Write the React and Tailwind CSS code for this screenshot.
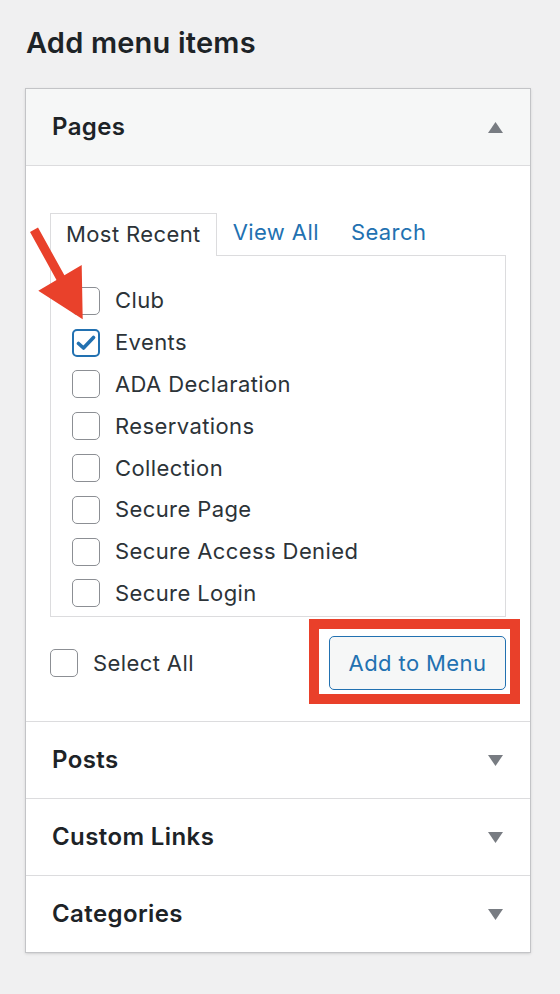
import React from 'react';

const pages = [
    { title: 'Club', checked: false },
    { title: 'Events', checked: true },
    { title: 'ADA Declaration', checked: false },
    { title: 'Reservations', checked: false },
    { title: 'Collection', checked: false },
    { title: 'Secure Page', checked: false },
    { title: 'Secure Access Denied', checked: false },
    { title: 'Secure Login', checked: false },
];

const Caret = ({ up }) => (
    <svg width="15" height="11" viewBox="0 0 15 11" className="shrink-0">
        {up ? <polygon points="7.5,0 15,11 0,11" fill="#787c82" /> : <polygon points="0,0 15,0 7.5,11" fill="#787c82" />}
    </svg>
);

const Checkbox = ({ checked }) => (
    <span
        className={`flex items-center justify-center w-[28px] h-[28px] rounded-[5px] bg-white shrink-0 ${
            checked ? 'border-2 border-[#2271b1]' : 'border border-[#8c8f94]'
        }`}
    >
        {checked && (
            <svg width="20" height="16" viewBox="0 0 20 16">
                <path d="M2.5 8.5 L7.5 13 L17.5 2.5" fill="none" stroke="#2271b1" strokeWidth="3.6" strokeLinecap="round" strokeLinejoin="round" />
            </svg>
        )}
    </span>
);

const Section = ({ title }) => (
    <div className="flex items-center justify-between h-[77px] pl-[26px] pr-[27px] border-t border-[#dcdcde]">
        <h3 className="text-[24px] font-semibold tracking-[0.4px] text-[#1d2327]">{title}</h3>
        <Caret />
    </div>
);

const App = () => {
    return (
        <div className="relative min-h-[994px] bg-[#f0f0f1] pt-[24px] font-['Inter',sans-serif]">
            <h2 className="ml-[26px] text-[29px] leading-[38px] font-semibold text-[#1d2327] tracking-[0.2px]">Add menu items</h2>

            <div className="ml-[25px] mt-[26px] w-[506px] bg-white border border-[#c3c4c7] shadow-sm">
                {/* Pages */}
                <div className="flex items-center justify-between h-[77px] pl-[26px] pr-[27px] bg-[#f6f7f7] border-b border-[#dcdcde]">
                    <h3 className="text-[24px] font-semibold tracking-[0.4px] text-[#1d2327]">Pages</h3>
                    <Caret up />
                </div>

                <div className="px-[24px] pt-[46px] pb-[31px] tracking-[0.4px]">
                    <div className="flex items-end text-[22px] leading-[28px]">
                        <div className="h-[43px] px-[15px] pt-[6px] border border-b-0 border-[#dcdcde] bg-white text-[#2c3338] -mb-px relative">
                            Most Recent
                        </div>
                        <div className="h-[43px] pt-[6px] pl-[16px] text-[#2271b1]">View All</div>
                        <div className="h-[43px] pt-[6px] pl-[32px] text-[#2271b1]">Search</div>
                    </div>
                    <div className="h-[362px] overflow-hidden border border-[#dcdcde] pt-[24px] pl-[21px]">
                        {pages.map((p) => (
                            <label key={p.title} className="flex items-center gap-[15px] h-[41.8px]">
                                <Checkbox checked={p.checked} />
                                <span className="text-[22px] text-[#2c3338]">{p.title}</span>
                            </label>
                        ))}
                    </div>

                    <div className="flex items-center justify-between mt-[19px]">
                        <label className="flex items-center gap-[15px]">
                            <Checkbox />
                            <span className="text-[22px] text-[#2c3338]">Select All</span>
                        </label>
                        <div className="relative">
                            <button className="w-[177px] h-[54px] rounded-[5px] border border-[#2271b1] bg-[#f6f7f7] text-[22px] tracking-[0.4px] text-[#2271b1]">
                                Add to Menu
                            </button>
                            <div className="absolute -left-[20px] -top-[17px] w-[211px] h-[85px] border-[10px] border-[#e9402a]" />
                        </div>
                    </div>
                </div>

                <Section title="Posts" />
                <Section title="Custom Links" />
                <Section title="Categories" />
            </div>

            <svg className="absolute left-0 top-0" width="120" height="340" viewBox="0 0 120 340">
                <polygon points="30,232 38,227.5 64.4,275.3 81.7,265 82.7,319.3 38.3,290.7 56.5,279.9" fill="#e9412b" />
            </svg>
        </div>
    );
};

export default App;
